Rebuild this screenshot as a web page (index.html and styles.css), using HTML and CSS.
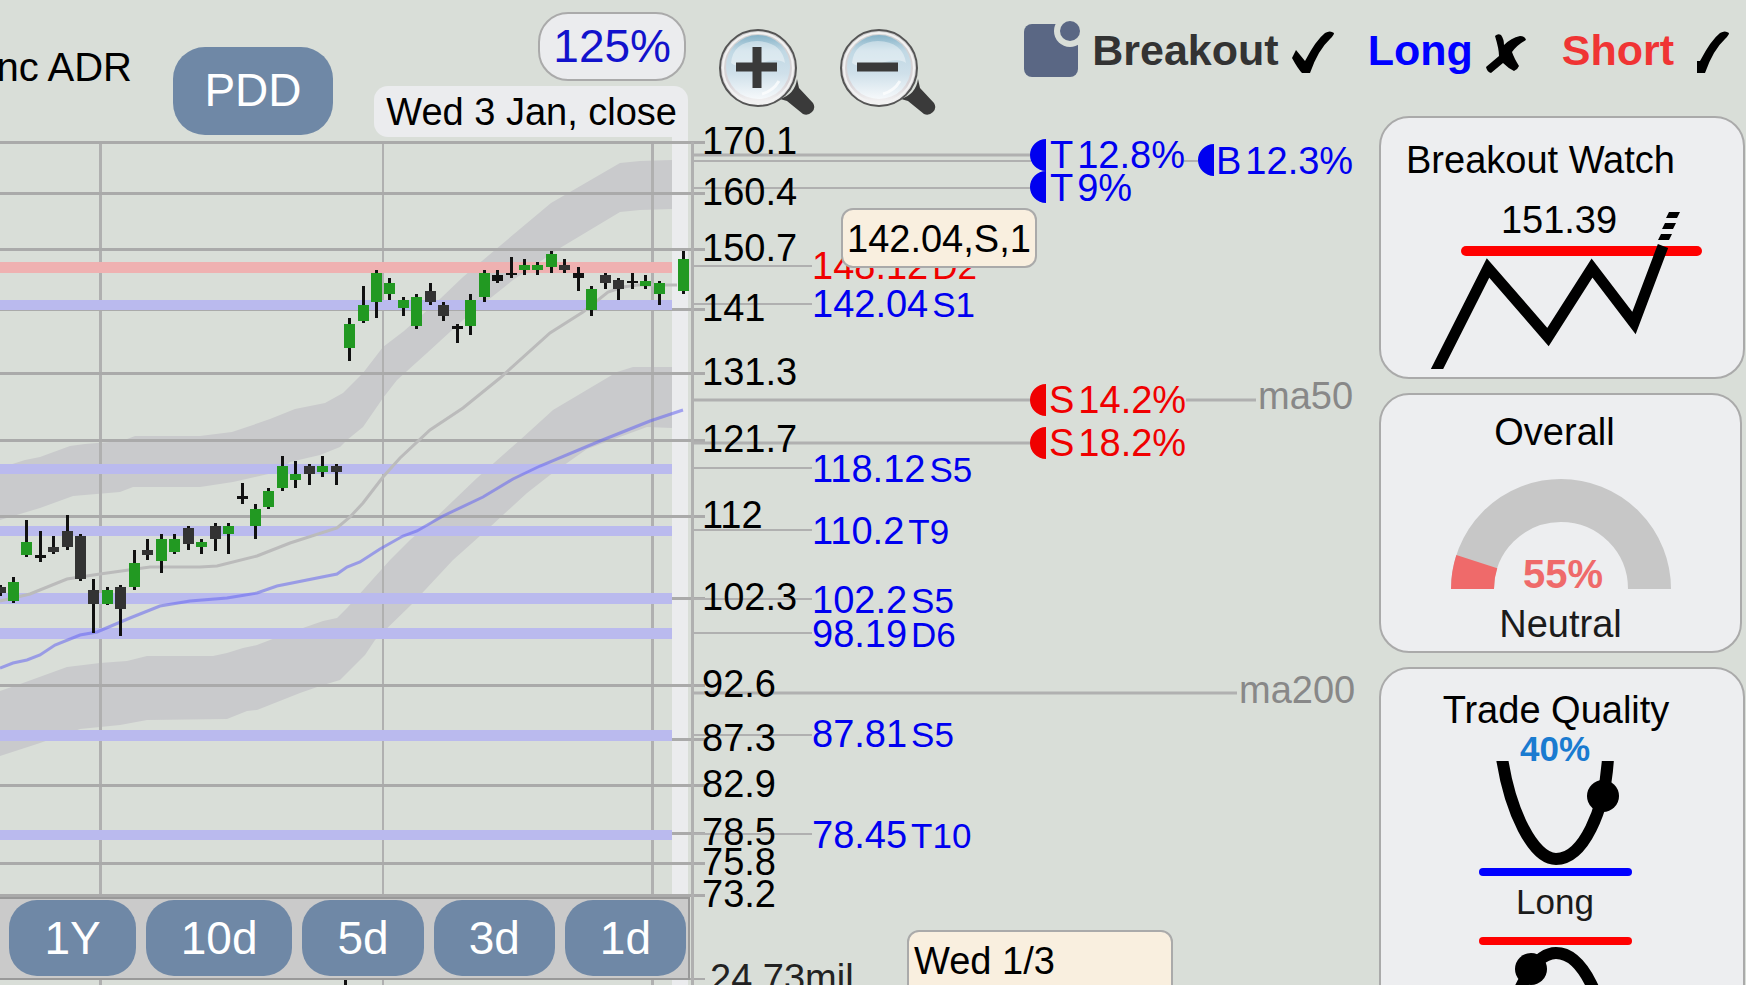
FILE: index.html
```
<!DOCTYPE html>
<html lang="en">
<head>
    <meta charset="UTF-8">
    <meta name="viewport" content="width=device-width, initial-scale=1.0">
    <link rel="stylesheet" href="styles.css">
    <title>PDD Chart</title>
</head>
<body>

<header class="topbar">
    <div class="company">nc ADR</div>
    <button class="symbol-button">PDD</button>
    <div class="scale-info">
        <button class="scale-button">125%</button>
        <div class="date-label">Wed 3 Jan, close</div>
    </div>
    <div class="zoom-buttons">
        <button aria-label="Zoom in">
            <svg width="96" height="88" viewBox="0 0 96 88">
                <defs>
                    <linearGradient id="rim" x1="0" y1="0" x2="0" y2="1">
                        <stop offset="0" stop-color="#d2d2d2"/>
                        <stop offset="0.7" stop-color="#d8d4d8"/>
                        <stop offset="1" stop-color="#f8f8f8"/>
                    </linearGradient>
                    <linearGradient id="lens" x1="0" y1="0" x2="0" y2="1">
                        <stop offset="0" stop-color="#86b3c8"/>
                        <stop offset="0.25" stop-color="#c0d8e4"/>
                        <stop offset="0.6" stop-color="#cfe0ea"/>
                        <stop offset="1" stop-color="#f6f9fb"/>
                    </linearGradient>
                </defs>
                <g id="glass">
                    <path d="M61 71 Q76 66 78 51 L80 60 L94 75 Q97 80 93 84 Q89 88 84 86 L68 73 Z" fill="#3a3a3a"/>
                    <circle cx="39" cy="40" r="38" fill="url(#rim)" stroke="#555" stroke-width="2"/>
                    <circle cx="39" cy="40" r="35" fill="none" stroke="#f2f2f2" stroke-width="2"/>
                    <circle cx="39" cy="39" r="32" fill="url(#lens)"/>
                    <path d="M12 35 Q14 14 38 13 Q63 14 66 35 Q58 29 39 36 Q22 42 12 35 Z" fill="#fff" opacity="0.4"/>
                    <path d="M60 53 Q54 63 43 66" fill="none" stroke="#fff" stroke-width="3" opacity="0.7"/>
                </g>
                <path d="M17 39 H58 M38 19 V60" stroke="#3a3a3a" stroke-width="9"/>
            </svg>
        </button>
        <button aria-label="Zoom out">
            <svg width="96" height="88" viewBox="0 0 96 88">
                <use href="#glass"/>
                <path d="M17 39 H58" stroke="#3a3a3a" stroke-width="9"/>
            </svg>
        </button>
    </div>
    <div class="signals">
        <svg class="note-icon" width="56" height="60" viewBox="0 0 56 60">
            <rect x="0" y="4" width="54" height="53" rx="8" fill="#5a6784"/>
            <circle cx="46" cy="11" r="16" fill="#d9ded8"/>
            <circle cx="46" cy="11" r="10" fill="#5a6784"/>
        </svg>
        <div class="signal breakout">Breakout
            <svg width="42" height="42" viewBox="0 0 42 42">
                <path d="M0 27 L4 19 L13 30 Q24 9 33 2 Q38 -1 42 2 Q42 4 38 8 Q26 19 18 42 L10 42 Q6 38 0 27 Z"/>
            </svg>
        </div>
        <div class="signal long">Long
            <svg width="42" height="42" viewBox="0 0 42 42">
                <path d="M9 5 Q12 2 15 4 Q18 8 18 14 Q25 7 34 5 Q39 5 40 9 Q31 14 26 21 Q28 27 33 35 Q32 38 28 40 Q22 37 17 32 L5 42 Q1 41 0 36 L13 25 Q13 18 9 5 Z"/>
            </svg>
        </div>
        <div class="signal short">Short
            <svg width="42" height="42" viewBox="0 0 42 42">
                <path d="M10 30 L13 30 Q24 9 33 2 Q38 -1 42 2 Q42 4 38 8 Q26 19 18 42 L10 42 Z"/>
            </svg>
        </div>
    </div>
</header>

<main class="chart">
    <svg class="chart-canvas" width="100%" height="848">
        <g transform="translate(0 -137)">
            <rect x="672" y="137" width="16" height="848" fill="#ebecee"/>
            <g class="ribbon">
                <path d="M0 468 L25 460 L40 457 L70 446 L85 444 L122 441 L135 436 L200 436 L232 432 L250 426 L270 419 L295 409 L325 403 L343 393 L363 373 L383 347 L404 331 L441 298 L463 277 L495 250 L551 203 L620 163 L640 161 L672 160 V209 L640 210 L620 212 L560 248 L513 280 L463 320 L427 353 L397 380 L383 398 L363 427 L347 440 L340 447 L320 455 L290 462 L277 472 L233 482 L200 487 L133 487 L120 492 L73 496 L40 508 L0 520 Z"/>
                <path d="M0 691 L23 683 L67 667 L100 663 L127 661 L147 656 L213 656 L227 653 L243 648 L257 645 L283 635 L323 621 L337 618 L347 608 L390 560 L410 540 L430 523 L477 478 L520 440 L553 410 L617 372 L633 367 L672 367 V428 L647 427 L587 449 L550 475 L527 493 L490 527 L453 560 L412 604 L375 640 L365 655 L340 680 L320 686 L300 693 L257 710 L247 711 L227 719 L147 720 L120 725 L80 729 L40 743 L0 756 Z"/>
            </g>
            <g id="grid"></g>
            <g id="bands"></g>
            <path class="ma20" d="M0 601 L30 594 L67 579 L100 574 L150 567 L200 567 L217 566 L257 556 L290 543 L337 528 L350 517 L363 503 L383 477 L400 458 L430 430 L463 408 L500 378 L550 333 L583 312 L608 292 L623 287 L638 285 L677 285"/>
            <path class="ma50" d="M0 668 L13 663 L27 660 L40 655 L55 645 L80 635 L97 632 L130 618 L160 606 L190 601 L227 598 L257 593 L277 586 L337 574 L347 567 L360 562 L380 549 L403 536 L417 531 L443 516 L483 497 L513 479 L540 466 L600 441 L650 421 L683 410"/>
            <g id="candles"></g>
            <path class="rule" d="M694 161 H1031 M1184 161 H1198 M694 188 H1031"/>
            <path class="rule wide" d="M694 155 H1031 M694 400 H1031 M1186 400 H1256 M694 443 H1031 M694 693 H1237"/>
            <g id="levels"></g>
            <g id="prices"></g>

            <path class="up" d="M1046 139 A16 16 0 0 0 1046 171 Z M1046 171 A16 16 0 0 0 1046 203 Z M1214 144 A16 16 0 0 0 1214 176 Z"/>
            <path class="down" d="M1046 384 A16 16 0 0 0 1046 416 Z M1046 427 A16 16 0 0 0 1046 459 Z"/>
            <text class="up" x="1050" y="168">T<tspan dx="4">12.8%</tspan></text>
            <text class="up" x="1050" y="201">T<tspan dx="4">9%</tspan></text>
            <text class="up" x="1216" y="174">B<tspan dx="4">12.3%</tspan></text>
            <text class="down" x="1049" y="413">S<tspan dx="4">14.2%</tspan></text>
            <text class="down" x="1049" y="456">S<tspan dx="4">18.2%</tspan></text>
            <text class="ma-label" x="1258" y="409">ma50</text>
            <text class="ma-label" x="1239" y="703">ma200</text>
        </g>
    </svg>

    <nav class="ranges">
        <button>1Y</button>
        <button>10d</button>
        <button>5d</button>
        <button>3d</button>
        <button>1d</button>
    </nav>

    <div class="tooltip level-tip">142.04,S,1</div>
    <div class="tooltip day-tip">Wed 1/3</div>
</main>

<aside class="sidebar">
    <section class="card watch">
        <h2>Breakout Watch</h2>
        <svg width="362" height="188" viewBox="0 0 362 188">
            <text x="178" y="52" text-anchor="middle">151.39</text>
            <path d="M85 70 H316" stroke="#f00" stroke-width="10" stroke-linecap="round"/>
            <path d="M54 192 L107 87 L167 156 L211 87 L253 142 L282 65" fill="none" stroke="#000" stroke-width="11"/>
            <path d="M277 59 L288 59 L291 53 L280 53 Z M281 48 L292 48 L295 42 L284 42 Z M285 37 L296 37 L299 31 L288 31 Z"/>
        </svg>
    </section>

    <section class="card overall">
        <h2>Overall</h2>
        <svg width="220" height="110" viewBox="0 0 220 110">
            <path d="M21.5 110 A88.5 88.5 0 0 1 198.5 110" fill="none" stroke="#c7c7c7" stroke-width="43"/>
            <path d="M21.5 110 A88.5 88.5 0 0 1 25.8 82.7" fill="none" stroke="#ef6a6a" stroke-width="43"/>
            <text x="112" y="109" text-anchor="middle">55%</text>
        </svg>
        <p>Neutral</p>
    </section>

    <section class="card quality">
        <h2>Trade Quality</h2>
        <p class="score">40%</p>
        <svg width="160" height="123" viewBox="0 0 160 123">
            <path d="M27 -3 C35 50 58 98 81 98 C108 98 130 50 133 -3" fill="none" stroke="#000" stroke-width="12"/>
            <circle cx="128" cy="35" r="16"/>
            <path d="M8 111 H153" stroke="#00f" stroke-width="8" stroke-linecap="round"/>
        </svg>
        <p>Long</p>
        <svg class="short-curve" width="160" height="120" viewBox="0 0 160 120">
            <path d="M8 6 H153" stroke="#f00" stroke-width="8" stroke-linecap="round"/>
            <path d="M27 119 C35 66 56 18 81 18 C108 18 130 66 133 119" fill="none" stroke="#000" stroke-width="12"/>
            <circle cx="56" cy="34" r="16"/>
        </svg>
    </section>
</aside>

<script>
    // label, y of the grid line
    const prices = [
        ['170.1', 142], ['160.4', 193], ['150.7', 249], ['141', 309], ['131.3', 373],
        ['121.7', 440], ['112', 516], ['102.3', 598], ['92.6', 685], ['87.3', 739],
        ['82.9', 785], ['78.5', 833], ['75.8', 863], ['73.2', 895]
    ];

    // price, strength, y of the line, text baseline, side
    const levels = [
        ['148.12', 'D2', 265, 279, 'down'], ['142.04', 'S1', 303, 317, 'up'],
        ['118.12', 'S5', 467, 482, 'up'], ['110.2', 'T9', 529, 544, 'up'],
        ['102.2', 'S5', 598, 613, 'up'], ['98.19', 'D6', 632, 647, 'up'],
        ['87.81', 'S5', 734, 747, 'up'], ['78.45', 'T10', 833, 848, 'up']
    ];

    // y, height, colour
    const bands = [
        [262, 11, '#efb1b1'], [300, 10, '#babaee'], [464, 10, '#babaee'],
        [526, 10, '#babaee'], [593, 11, '#babaee'], [628, 11, '#babaee'],
        [730, 11, '#babaee'], [830, 10, '#babaee']
    ];

    // x, high, low, body top, body bottom, colour
    const candles = [
        [0, 585, 596, 587, 593, 'k'], [13, 577, 603, 582, 601, 'g'], [26, 520, 557, 542, 555, 'g'],
        [40, 531, 562, 555, 558, 'b'], [53, 536, 554, 547, 552, 'k'], [67, 515, 550, 531, 547, 'k'],
        [80, 534, 581, 536, 579, 'k'], [93, 579, 633, 590, 604, 'k'], [107, 587, 605, 590, 604, 'g'],
        [120, 585, 636, 587, 609, 'k'], [134, 550, 590, 563, 587, 'g'], [147, 539, 560, 550, 555, 'k'],
        [161, 534, 573, 539, 561, 'g'], [174, 534, 554, 539, 552, 'g'], [188, 526, 550, 528, 544, 'k'],
        [201, 539, 554, 542, 547, 'g'], [215, 523, 551, 526, 539, 'k'], [228, 523, 554, 526, 534, 'g'],
        [242, 483, 504, 496, 499, 'b'], [255, 504, 539, 509, 526, 'g'], [268, 488, 509, 491, 507, 'g'],
        [282, 456, 491, 466, 488, 'g'], [295, 461, 488, 474, 480, 'g'], [309, 464, 485, 466, 474, 'k'],
        [322, 456, 477, 466, 472, 'g'], [336, 464, 485, 466, 472, 'k'], [349, 318, 361, 324, 348, 'g'],
        [363, 286, 323, 305, 321, 'g'], [376, 270, 318, 273, 302, 'g'], [389, 278, 300, 283, 294, 'g'],
        [403, 297, 316, 300, 308, 'g'], [416, 294, 329, 297, 326, 'g'], [430, 283, 305, 291, 302, 'k'],
        [443, 302, 321, 305, 316, 'k'], [457, 324, 343, 326, 329, 'b'], [470, 294, 335, 300, 326, 'g'],
        [484, 270, 302, 273, 297, 'g'], [497, 270, 283, 275, 281, 'b'], [511, 257, 278, 273, 275, 'b'],
        [524, 259, 275, 265, 270, 'g'], [537, 262, 275, 265, 270, 'g'], [551, 251, 273, 254, 267, 'g'],
        [564, 259, 273, 265, 270, 'k'], [578, 267, 291, 273, 278, 'b'], [591, 286, 316, 289, 310, 'g'],
        [605, 273, 289, 275, 283, 'k'], [618, 278, 300, 280, 289, 'k'], [632, 273, 289, 281, 283, 'b'],
        [645, 275, 289, 281, 286, 'g'], [659, 281, 305, 283, 294, 'g'], [683, 251, 294, 259, 291, 'g']
    ];

    const colours = { g: '#229922', k: '#333333', b: '#111111' };

    function rect(x, y, w, h, fill) {
        return `<rect x="${x}" y="${y}" width="${w}" height="${h}" fill="${fill}"/>`;
    }

    function draw(id, items) {
        document.getElementById(id).innerHTML = items.join('');
    }

    draw('grid', [
        rect(99, 142, 3, 843, '#b0b0b0'),
        rect(382, 142, 2, 843, '#b0b0b0'),
        rect(651, 142, 3, 843, '#b0b0b0'),
        ...prices.map(([label, y]) => rect(0, y - 1, 705, 3, '#aaaaaa')),
        rect(690, 978, 15, 2, '#aaaaaa'),
        rect(691, 142, 3, 843, '#b0b0b0')
    ]);

    draw('bands', bands.map(([y, h, fill]) => rect(0, y, 672, h, fill)));

    draw('candles', [
        ...candles.map(([x, high, low, top, bottom, c]) =>
            rect(x - 1, high, 3, low - high, '#111111') + rect(x - 5, top, 11, bottom - top, colours[c])),
        rect(344, 979, 3, 6, '#111111')
    ]);

    draw('levels', levels.map(([price, mark, y, base, side]) =>
        rect(694, y, 118, 2, '#b0b0b0') +
        `<text class="${side}" x="812" y="${base}">${price}<tspan class="mark" dx="4">${mark}</tspan></text>`));

    draw('prices', [
        ...prices.map(([label, y]) => `<text x="702" y="${y + 12}">${label}</text>`),
        '<text class="volume" x="710" y="991">24.73mil</text>'
    ]);
</script>

</body>
</html>
```
FILE: styles.css
```
* {
    box-sizing: border-box;
}

body {
    margin: 0;
    height: 100vh;
    overflow: hidden;
    background: #d9ded8;
    font-family: "Liberation Sans", Arial, sans-serif;
    font-size: 38px;
    line-height: 42px;
    color: #000;
    display: grid;
    grid-template-columns: minmax(0, 1fr) 366px;
    grid-template-rows: 116px 21px minmax(0, 1fr);
    column-gap: 13px;
    padding-right: 1px;
}

button {
    font: inherit;
    margin: 0;
    padding: 0;
    border: none;
    background: none;
    cursor: pointer;
}

svg {
    display: block;
}

h2, p {
    margin: 0;
    font-size: 38px;
    font-weight: normal;
}

/* top bar */

.topbar {
    grid-column: 1 / 3;
    grid-row: 1 / 3;
    display: flex;
    align-items: flex-start;
}

.company {
    width: 132px;
    padding-top: 45px;
    display: flex;
    justify-content: flex-end;
    overflow: hidden;
    white-space: nowrap;
    font-size: 40px;
    line-height: 44px;
}

.symbol-button {
    width: 160px;
    height: 88px;
    margin: 47px 0 0 41px;
    padding-bottom: 2px;
    border-radius: 32px;
    background: #6f88a6;
    color: #fff;
    font-size: 46px;
}

.scale-info {
    width: 355px;
    height: 137px;
    padding-top: 12px;
    display: flex;
    flex-direction: column;
    align-items: flex-end;
    justify-content: space-between;
}

.scale-button {
    height: 69px;
    margin-right: 2px;
    padding: 0 13px 2px;
    border: 2px solid #aaa;
    border-radius: 30px;
    background: #ebecee;
    color: #1212cc;
    font-size: 46px;
}

.date-label {
    height: 51px;
    padding: 5px 11px 0 12px;
    border-radius: 14px 14px 0 14px;
    background: #ebecee;
    white-space: nowrap;
}

.zoom-buttons {
    display: flex;
    gap: 25px;
    margin: 28px 0 0 31px;
}

.signals {
    display: flex;
    align-items: center;
    gap: 34px;
    height: 60px;
    margin: 20px 16px 0 auto;
    font-size: 43px;
    font-weight: bold;
    line-height: 48px;
}

.note-icon {
    margin-right: -22px;
}

.signal {
    display: flex;
    align-items: center;
    gap: 13px;
}

.signal svg {
    margin-top: 4px;
}

.breakout {
    color: #333;
}

.long {
    color: #00f;
}

.short {
    color: #f03434;
}

/* chart */

.chart {
    grid-column: 1;
    grid-row: 3;
    position: relative;
    display: grid;
    grid-template-columns: 690px minmax(0, 1fr);
}

.chart-canvas {
    grid-column: 1 / 3;
    grid-row: 1;
    overflow: visible;
}

.ribbon {
    fill: #c9cacc;
}

.ma20 {
    fill: none;
    stroke: #bbb;
    stroke-width: 3;
}

.ma50 {
    fill: none;
    stroke: #6464f0;
    stroke-width: 3;
    opacity: 0.55;
}

.rule {
    stroke: #b0b0b0;
    stroke-width: 2;
}

.rule.wide {
    stroke-width: 3;
}

.up {
    fill: #0000f0;
}

.down {
    fill: #f00000;
}

.ma-label {
    fill: #888;
}

.mark {
    font-size: 35px;
}

.volume {
    fill: #222;
}

.ranges {
    grid-column: 1;
    grid-row: 1;
    align-self: end;
    display: flex;
    justify-content: flex-end;
    gap: 10px;
    margin-bottom: 5px;
    padding: 1px 2px 2px 0;
    border: 2px solid #999;
    border-left: none;
    background: #cacaca;
}

.ranges button {
    height: 76px;
    padding: 0 35px 1px;
    border-radius: 28px;
    background: #6f88a6;
    color: #fff;
    font-size: 46px;
}

.tooltip {
    position: absolute;
    border: 2px solid #aaa;
    border-radius: 12px;
    background: #f9efdf;
    white-space: nowrap;
}

.level-tip {
    left: 841px;
    top: 71px;
    padding: 8px 4px 6px;
}

.day-tip {
    left: 907px;
    top: 793px;
    width: 266px;
    height: 100px;
    padding: 8px 5px;
}

/* sidebar */

.sidebar {
    grid-column: 2;
    grid-row: 2 / 4;
    display: flex;
    flex-direction: column;
    gap: 14px;
    min-height: 0;
    overflow: hidden;
}

.card {
    flex: none;
    display: flex;
    flex-direction: column;
    align-items: center;
    border: 2px solid #aaa;
    border-radius: 30px;
    background: #edeef0;
    color: #1b1b1b;
}

.card h2 {
    padding-right: 12px;
    color: #000;
}

.watch {
    padding: 21px 0 8px;
}

.watch h2 {
    align-self: flex-start;
    padding-left: 25px;
}

.overall {
    margin-right: 3px;
    padding: 16px 0 6px;
}

.overall svg {
    margin: 26px 0 14px;
}

.overall text {
    fill: #ef6a6a;
    font-size: 40px;
    font-weight: bold;
}

.quality {
    padding: 20px 0;
}

.quality p,
.quality svg {
    margin-right: 14px;
}

.quality p {
    font-size: 35px;
    line-height: 36px;
}

.quality .score {
    height: 30px;
    color: #1a7bd0;
    font-weight: bold;
}

.short-curve {
    margin-top: 15px;
}
```
